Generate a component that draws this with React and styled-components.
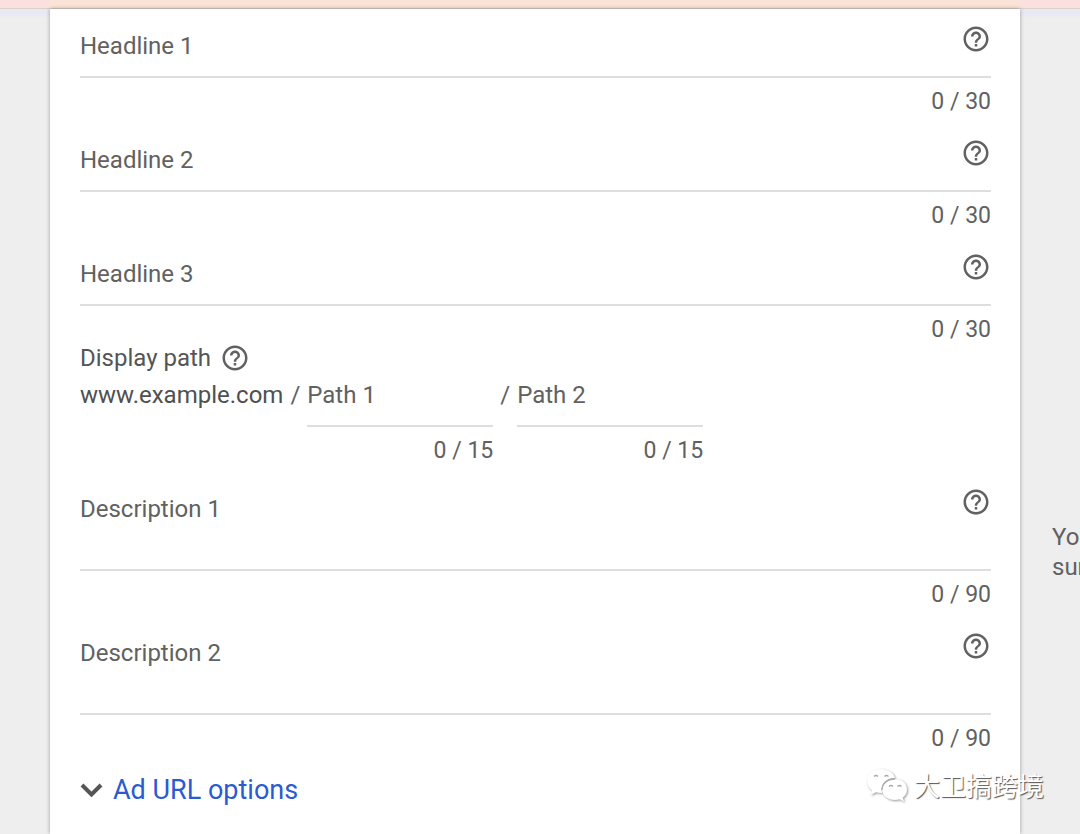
import React, { useId, useState } from "react";
import styled, { createGlobalStyle } from "styled-components";
import { MdHelpOutline } from "react-icons/md";

const GlobalStyle = createGlobalStyle`
  * {
    box-sizing: border-box;
  }
  body {
    margin: 0;
    background-color: #eeeeee;
    color: #616161;
    font-family: Roboto, "Noto Sans CJK SC", sans-serif;
    font-size: 24px;
    line-height: 30px;
  }
  input, textarea, button {
    font: inherit;
    color: inherit;
    border: none;
    background: none;
    padding: 0;
    outline: none;
  }
`;

const Page = styled.div`
  min-height: 100vh;
  display: flex;
  flex-direction: column;
  overflow: hidden;
`;

const Banner = styled.div`
  height: 9px;
  background: linear-gradient(90deg, #fae1df 50px, #fae4d7 50px, #fae4d7 calc(100% - 60px), #fae1df calc(100% - 60px));
  border-bottom: 1px solid #ddd0c8;
`;

const Body = styled.div`
  flex: 1;
  display: flex;
  padding-left: 50px;
  background: linear-gradient(#e9e9f5 6px, #eeeeee 8px);
`;

const Card = styled.form`
  flex: 1;
  min-width: 0;
  display: flex;
  flex-direction: column;
  gap: 22px;
  padding: 15px 29px 24px 30px;
  background-color: #fff;
  box-shadow: 0 0 4px rgba(0, 0, 0, 0.35);
`;

const Aside = styled.aside`
  width: 60px;
  padding: 513px 0 0 32px;
  white-space: nowrap;
  overflow: hidden;
`;

const Field = styled.div`
  display: flex;
  flex-direction: column;
  gap: 10px;
`;

const FieldRow = styled.div`
  display: flex;
  align-items: flex-start;
  gap: 8px;
  height: ${(props) => (props.$tall ? "84px" : "54px")};
  border-bottom: 2px solid #dedede;
`;

const FieldLabel = styled.label`
  padding-top: 7px;
`;

const FieldInput = styled.input`
  flex: 1;
  min-width: 0;
  height: 30px;
  margin-top: 7px;
`;

const FieldText = styled.textarea`
  flex: 1;
  min-width: 0;
  height: 60px;
  margin-top: 7px;
  resize: none;
`;

const HelpButton = styled.button`
  display: flex;
  cursor: pointer;
  color: #616161;
`;

const Counter = styled.span`
  align-self: flex-end;
  font-size: 23px;
  line-height: 28px;
`;

const Paths = styled.section`
  display: flex;
  flex-direction: column;
  gap: 7px;
  margin-top: -23px;
`;

const PathTitle = styled.div`
  display: flex;
  align-items: center;
  gap: 9px;
  color: #555;
`;

const PathRow = styled.div`
  display: flex;
  align-items: flex-start;
  gap: 7px;
`;

const Domain = styled.span`
  color: #505050;
`;

const PathField = styled(Field)`
  width: 186px;
`;

const PathInputRow = styled.div`
  display: flex;
  gap: 8px;
  height: 47px;
  border-bottom: 2px solid #dedede;
`;

const PathInput = styled.input`
  flex: 1;
  min-width: 0;
  height: 30px;
`;

const OptionsButton = styled.button`
  align-self: flex-start;
  display: flex;
  align-items: center;
  gap: 10px;
  font-size: 27px;
  color: #2a5bd0;
  cursor: pointer;
`;

const Watermark = styled.div`
  position: absolute;
  right: 36px;
  bottom: 32px;
  display: flex;
  align-items: center;
  gap: 6px;
  color: #fff;
  font-family: "Noto Sans CJK SC", sans-serif;
  font-size: 26px;
  font-weight: 400;
  line-height: 34px;
  text-shadow: 1px 1px 1px #555;
  pointer-events: none;

  svg {
    filter: drop-shadow(1px 1px 1px #999);
  }
`;

const Help = ({ topic }) => (
  <HelpButton type="button" aria-label={`Help: ${topic}`}>
    <MdHelpOutline size={30} />
  </HelpButton>
);

const TextField = ({ label, max, multiline }) => {
  const id = useId();
  const [value, setValue] = useState("");
  const Control = multiline ? FieldText : FieldInput;

  return (
    <Field>
      <FieldRow $tall={multiline}>
        <FieldLabel htmlFor={id}>{label}</FieldLabel>
        <Control id={id} maxLength={max} value={value} onChange={(e) => setValue(e.target.value)} />
        <Help topic={label} />
      </FieldRow>
      <Counter>{value.length} / {max}</Counter>
    </Field>
  );
};

const PathPart = ({ label }) => {
  const id = useId();
  const [value, setValue] = useState("");

  return (
    <PathField>
      <PathInputRow>
        <label htmlFor={id}>{label}</label>
        <PathInput id={id} maxLength={15} value={value} onChange={(e) => setValue(e.target.value)} />
      </PathInputRow>
      <Counter>{value.length} / 15</Counter>
    </PathField>
  );
};

const Chevron = () => (
  <svg width="23" height="14" viewBox="0 0 23 14" fill="none" stroke="#555" strokeWidth="4">
    <path d="M2 2l9.500 9.500L21 2" />
  </svg>
);

const Bubbles = () => (
  <svg width="42" height="34" viewBox="0 0 42 34" fill="#fff">
    <path d="M15 1C7 1 1 6 1 13c0 4 2 7 5 9.500L4.500 27l5.500-2.700c2 .6 4 .9 6 .8C14 16 20 10 29 10 27.500 4.500 22 1 15 1z" />
    <path d="M29 11c-7 0-13 4.500-13 10.500S22 32 29 32c1.500 0 3-.3 4.500-.7L38 33.500l-1.200-4C39.500 27.500 41 25 41 21.500 41 15.500 36 11 29 11z" />
    <g fill="none" stroke="#aaa" strokeWidth="1.300">
      <path d="M16 22c0-6 5-11 13-11" />
      <path d="M8 8.500q2-2 4 0M18.500 8.500q2-2 4 0" />
      <path d="M23 18.500q2-2 4 0M31.500 18.500q2-2 4 0" />
    </g>
  </svg>
);

const App = () => {
  return (
    <>
      <GlobalStyle />
      <Page>
        <Banner />
        <Body>
          <Card>
            <TextField label="Headline 1" max={30} />
            <TextField label="Headline 2" max={30} />
            <TextField label="Headline 3" max={30} />
            <Paths>
              <PathTitle>
                Display path
                <Help topic="Display path" />
              </PathTitle>
              <PathRow>
                <Domain>www.example.com</Domain>
                <span>/</span>
                <PathPart label="Path 1" />
                <span>/</span>
                <PathPart label="Path 2" />
              </PathRow>
            </Paths>
            <TextField label="Description 1" max={90} multiline />
            <TextField label="Description 2" max={90} multiline />
            <OptionsButton type="button">
              <Chevron />
              Ad URL options
            </OptionsButton>
          </Card>
          <Aside>
            You
            <br />
            sur
          </Aside>
        </Body>
      </Page>
      <Watermark>
        <Bubbles />
        大卫搞跨境
      </Watermark>
    </>
  );
};

export default App;
